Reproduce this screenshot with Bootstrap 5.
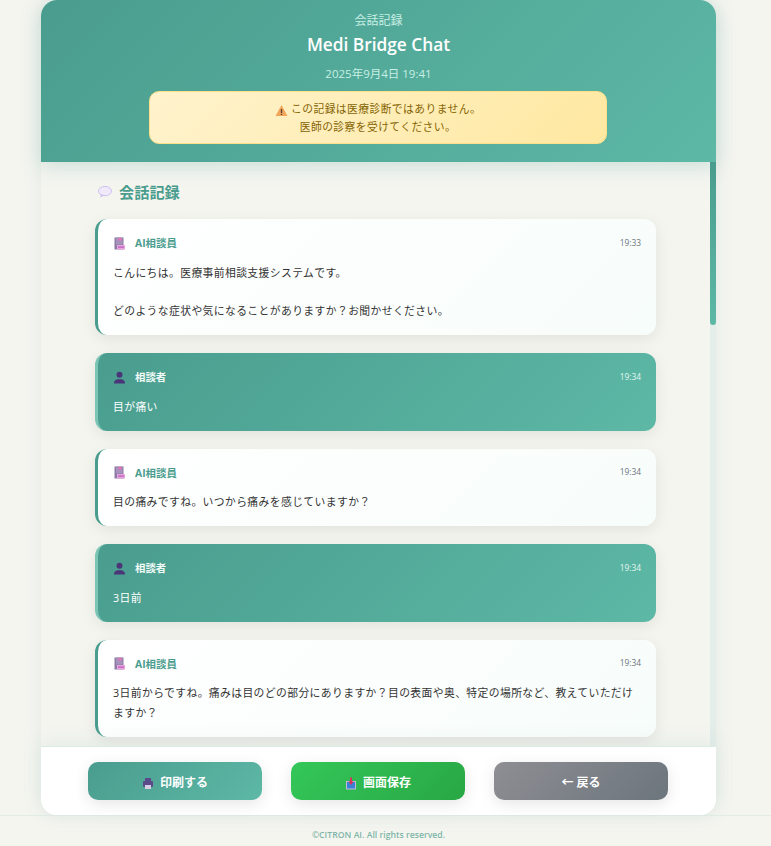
<!DOCTYPE html>
<html lang="ja">
<head>
  <meta charset="UTF-8" />
  <meta name="viewport" content="width=device-width, initial-scale=1.0" />
  <title>Medi Bridge Chat</title>
  <link href="https://cdn.jsdelivr.net/npm/bootstrap@5.3.0/dist/css/bootstrap.min.css" rel="stylesheet">
  <style>
    html, body { height: 100%; }
    body {
      font-family: "Open Sans", "Noto Sans CJK JP", sans-serif;
      background-color: #f5f5f0;
      color: #333;
      overflow: hidden;
    }
    .page-wrap { height: 846px; }
    .shell {
      width: 675px;
      height: 815px;
      margin-left: 41px;
      background: #fff;
      border-radius: 16px;
      box-shadow: 0 0 20px rgba(74, 157, 142, .1);
    }
    .chat-head {
      height: 162px;
      padding-top: 12px;
      background: linear-gradient(135deg, #4a9d8e, #5db8a6);
      border-radius: 16px 16px 0 0;
      box-shadow: 0 4px 20px rgba(74, 157, 142, .25);
      z-index: 2;
    }
    .head-label { font-size: 12px; line-height: 17px; color: #c8efe4; }
    .head-title { font-size: 17.3px; line-height: 24px; font-weight: 600; color: #fff; margin: 4px 0 8px; }
    .head-date { font-size: 11.5px; line-height: 17px; color: #c8efe4; margin-bottom: 9px; }
    .notice {
      width: 458px;
      height: 53px;
      margin-left: 108px;
      padding-top: 8px;
      font-size: 10.8px;
      line-height: 18px;
      letter-spacing: .4px;
      color: #856404;
      background: linear-gradient(135deg, #fff3cd, #ffe8a1);
      border: 1px solid #ffe08a;
      border-radius: 10px;
    }
    .scroll-area {
      height: 584px;
      background: #f5f5f0;
      overflow: hidden;
      padding: 19px 60px 0 54px;
    }
    .track {
      position: absolute;
      top: 0;
      right: 0;
      bottom: 0;
      width: 6px;
      background: #e3ede9;
    }
    .thumb {
      height: 163px;
      background: linear-gradient(180deg, #4a9d8e, #5db8a6);
      border-radius: 0 0 3px 3px;
    }
    .sect-title {
      font-size: 15.2px;
      line-height: 22px;
      font-weight: 700;
      color: #4a9d8e;
      margin-bottom: 16px;
      padding-left: 3px;
      gap: 7px;
    }
    .msg {
      padding: 16px 15px 14.5px 15px;
      margin-bottom: 18px;
      border-radius: 12px;
      border-left: 3px solid #4a9d8e;
      box-shadow: 0 4px 15px rgba(0, 0, 0, .08);
    }
    .msg-ai { background: linear-gradient(135deg, #fff, #f7fdfb); }
    .msg-user {
      color: #fff;
      background: linear-gradient(135deg, #4a9d8e, #5db8a6);
      border-left-color: #7cc4b4;
    }
    .msg-who { font-size: 10.4px; line-height: 16px; font-weight: 700; color: #4a9d8e; gap: 9px; }
    .msg-user .msg-who { color: #f0fbf8; }
    .msg-time { font-size: 8.4px; color: #6c757d; }
    .msg-user .msg-time { color: #e4f6f1; }
    .msg-text { font-size: 10.8px; line-height: 19.44px; letter-spacing: .4px; margin: 11.5px 0 0; }
    .msg-user .msg-text { color: #fff; }
    .ico { flex: none; display: inline-block; }
    .action-bar {
      height: 69px;
      padding: 15px 1px 0 0;
      background: #fff;
      border-top: 1px solid #d9ece6;
      border-radius: 0 0 16px 16px;
      box-shadow: 0 -4px 20px rgba(74, 157, 142, .1);
      z-index: 2;
      gap: 29px;
    }
    .act-btn {
      width: 174px;
      height: 38px;
      padding-top: 10px;
      border: 0;
      border-radius: 10px;
      font-size: 12px;
      font-weight: 700;
      color: #fff;
      box-shadow: 0 4px 15px rgba(0, 0, 0, .1);
      gap: 6px;
    }
    .act-btn:hover { color: #fff; }
    .btn-print { background: linear-gradient(135deg, #4a9d8e, #5db8a6); }
    .btn-save { background: linear-gradient(135deg, #34c759, #28a745); }
    .btn-back { background: linear-gradient(135deg, #8e8e93, #6c757d); }
    .page-foot {
      height: 31px;
      padding-right: 14px;
      line-height: 38px;
      font-size: 8.7px;
      font-weight: 600;
      color: #7fb5a8;
      border-top: 1px solid #e3ece7;
    }
  </style>
</head>
<body>
  <svg width="0" height="0" class="d-block">
    <defs>
      <symbol id="i-book" viewBox="0 0 13 13">
        <rect x="1.5" y="0.5" width="9" height="12" fill="#8d7aa6"/>
        <rect x="3" y="0.5" width="6.5" height="7" fill="#a593bb"/>
        <rect x="5.5" y="1" width="3" height="2.5" fill="#e86fb0"/>
        <rect x="4" y="8" width="8" height="4.5" fill="#e9a6dc"/>
        <rect x="5" y="9.5" width="6" height="1.2" fill="#b65cc0"/>
      </symbol>
      <symbol id="i-person" viewBox="0 0 13 13">
        <circle cx="6.5" cy="3.8" r="3" fill="#4a3578"/>
        <path d="M1 12.5c0-3 1.600-3.600 3.500-4.300h4c1.900.7 3.500 1.300 3.500 4.300z" fill="#4a3578"/>
      </symbol>
    </defs>
  </svg>

  <div class="page-wrap d-flex flex-column">
    <div class="shell d-flex flex-column">
      <header class="chat-head position-relative text-center">
        <div class="head-label">会話記録</div>
        <div class="head-title">Medi Bridge Chat</div>
        <div class="head-date">2025年9月4日 19:41</div>
        <div class="notice">
          <svg class="ico align-middle" width="13" height="13" viewBox="0 0 12 12"><path d="M6 1 11.500 11H.5z" fill="#f2a65a"/><path d="M5.400 4.500h1.200v3.700H5.400zM5.400 9h1.200v1.200H5.400z" fill="#5a4030"/></svg>
          この記録は医療診断ではありません。<br>医師の診察を受けてください。
        </div>
      </header>

      <main class="position-relative flex-grow-1 overflow-hidden">
        <div class="scroll-area">
          <h2 class="sect-title d-flex align-items-center">
            <svg class="ico" width="14" height="14" viewBox="0 0 15 14"><ellipse cx="7.500" cy="6" rx="7" ry="5" fill="#efe9fb" stroke="#cdbdf0"/><path d="M3 9.500 2.500 13 7 10.500z" fill="#cdbdf0"/></svg>
            会話記録
          </h2>

          <div class="msg msg-ai">
            <div class="d-flex justify-content-between align-items-center">
              <div class="msg-who d-flex align-items-center"><svg class="ico" width="13" height="13"><use href="#i-book"/></svg>AI相談員</div>
              <div class="msg-time">19:33</div>
            </div>
            <p class="msg-text">こんにちは。医療事前相談支援システムです。<br><br>どのような症状や気になることがありますか？お聞かせください。</p>
          </div>

          <div class="msg msg-user">
            <div class="d-flex justify-content-between align-items-center">
              <div class="msg-who d-flex align-items-center"><svg class="ico" width="13" height="13"><use href="#i-person"/></svg>相談者</div>
              <div class="msg-time">19:34</div>
            </div>
            <p class="msg-text">目が痛い</p>
          </div>

          <div class="msg msg-ai">
            <div class="d-flex justify-content-between align-items-center">
              <div class="msg-who d-flex align-items-center"><svg class="ico" width="13" height="13"><use href="#i-book"/></svg>AI相談員</div>
              <div class="msg-time">19:34</div>
            </div>
            <p class="msg-text">目の痛みですね。いつから痛みを感じていますか？</p>
          </div>

          <div class="msg msg-user">
            <div class="d-flex justify-content-between align-items-center">
              <div class="msg-who d-flex align-items-center"><svg class="ico" width="13" height="13"><use href="#i-person"/></svg>相談者</div>
              <div class="msg-time">19:34</div>
            </div>
            <p class="msg-text">3日前</p>
          </div>

          <div class="msg msg-ai">
            <div class="d-flex justify-content-between align-items-center">
              <div class="msg-who d-flex align-items-center"><svg class="ico" width="13" height="13"><use href="#i-book"/></svg>AI相談員</div>
              <div class="msg-time">19:34</div>
            </div>
            <p class="msg-text">3日前からですね。痛みは目のどの部分にありますか？目の表面や奥、特定の場所など、教えていただけますか？</p>
          </div>
        </div>
        <div class="track"><div class="thumb"></div></div>
      </main>

      <div class="action-bar position-relative d-flex justify-content-center">
        <button type="button" class="btn act-btn btn-print d-flex align-items-center justify-content-center">
          <svg class="ico" width="12" height="13" viewBox="0 0 12 13"><rect x="3" y="1" width="6" height="4" fill="#5a4a8a"/><rect x="1" y="4" width="10" height="6" rx="1" fill="#5a4a8a"/><rect x="3" y="8" width="6" height="4" fill="#d8cfe6"/></svg>
          印刷する
        </button>
        <button type="button" class="btn act-btn btn-save d-flex align-items-center justify-content-center">
          <svg class="ico" width="12" height="13" viewBox="0 0 12 13"><rect x="1" y="4" width="10" height="8.500" fill="#c7b7dc"/><rect x="2" y="5" width="8" height="6.500" fill="#3b82d6"/><path d="M5 .5h2v4h1.800L6 8 3.200 4.500H5z" fill="#d8315b"/></svg>
          画面保存
        </button>
        <button type="button" class="btn act-btn btn-back">← 戻る</button>
      </div>
    </div>
    <footer class="page-foot text-center">©CITRON AI. All rights reserved.</footer>
  </div>

  <script src="https://cdn.jsdelivr.net/npm/bootstrap@5.3.0/dist/js/bootstrap.bundle.min.js"></script>
</body>
</html>
